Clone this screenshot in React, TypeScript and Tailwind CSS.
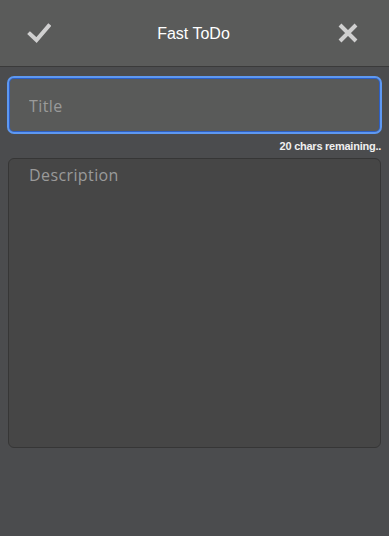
import React, { useState } from 'react';

const MAX = 20;

const App = () => {
  const [title, setTitle] = useState('');
  const [desc, setDesc] = useState('');

  return (
    <div className="w-[389px] h-[536px] bg-[#4b4c4e] flex flex-col font-['Liberation_Sans',Arial,sans-serif]">
      {/* Header */}
      <header className="h-[67px] bg-[#5a5b5a] border-b border-[#3a3a3a] flex items-center justify-between px-[26px] shrink-0">
        <button aria-label="Save" className="w-[26px] h-[26px] flex items-center justify-center">
          <svg width="24" height="22" viewBox="0 0 24 22">
            <path d="M3 12 L9.5 18 L21.5 4" fill="none" stroke="#d0d0d0" strokeWidth="4" strokeLinecap="square" strokeLinejoin="miter" />
          </svg>
        </button>
        <h1 className="text-white text-[16px] mt-[1px]">Fast ToDo</h1>
        <button aria-label="Close" className="w-[26px] h-[26px] flex items-center justify-center mr-[2px]">
          <svg width="22" height="22" viewBox="0 0 22 22">
            <path d="M3 3 L19 19 M19 3 L3 19" fill="none" stroke="#d0d0d0" strokeWidth="4" />
          </svg>
        </button>
      </header>

      {/* Form */}
      <div className="flex flex-col px-[7px] pt-[9px]">
        <input
          value={title}
          maxLength={MAX}
          onChange={(e) => setTitle(e.target.value)}
          placeholder="Title"
          className="h-[58px] w-full rounded-[7px] border-2 border-[#5d98f2] shadow-[inset_0_0_0_1px_#2d5fc4] bg-[#595a59] px-[20px] pt-[1px] text-[16px] text-white placeholder:text-[#9a9a9a] outline-none font-['Open_Sans',sans-serif] tracking-[0.4px]"
        />
        <div className="text-right text-[#f0f0f0] text-[11px] font-bold font-['Liberation_Sans',Arial,sans-serif] mt-[5px] pr-[1px] leading-[14px] tracking-[-0.25px]">
          {MAX - title.length} chars remaining..
        </div>
        <textarea
          value={desc}
          onChange={(e) => setDesc(e.target.value)}
          placeholder="Description"
          className="mt-[5px] mx-[1px] h-[290px] resize-none rounded-[6px] border border-[#363636] bg-[#464646] px-[20px] py-[4px] text-[16px] text-white placeholder:text-[#9a9a9a] outline-none font-['Open_Sans',sans-serif] tracking-[0.4px]"
        />
      </div>
    </div>
  );
};

export default App;
